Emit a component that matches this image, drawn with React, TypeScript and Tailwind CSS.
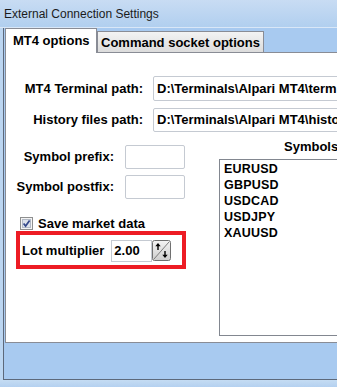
const inputBox =
  "bg-white border border-[#c5cad2] rounded-[2px] flex items-center";

function CheckBox() {
  return (
    <svg width="13" height="13" viewBox="0 0 13 13">
      <rect x="0.5" y="0.5" width="12" height="12" fill="#f4f4f4" stroke="#8e8f8f" />
      <rect x="2.5" y="2.5" width="8" height="8" fill="#dde2ea" stroke="#b3bac6" />
      <path d="M3.6 6.4 L5.6 9 L9.6 3.4" stroke="#34488a" strokeWidth="1.7" fill="none" />
    </svg>
  );
}

function Spinner() {
  return (
    <svg width="19" height="21" viewBox="0 0 19 21">
      <defs>
        <linearGradient id="spin" x1="0" y1="0" x2="0" y2="1">
          <stop offset="0" stopColor="#f4f4f4" />
          <stop offset="1" stopColor="#cdcdcd" />
        </linearGradient>
      </defs>
      <rect x="0.5" y="0.5" width="18" height="20" rx="2" fill="url(#spin)" stroke="#707070" />
      <line x1="2" y1="19" x2="17" y2="2" stroke="#7d7d7d" />
      <path d="M6 3 L3.3 6.2 H5.3 V10 H6.7 V6.2 H8.7 Z" fill="#000" />
      <path d="M13 18 L10.3 14.8 H12.3 V11 H13.7 V14.8 H15.7 Z" fill="#000" />
    </svg>
  );
}

export default function App() {
  const symbols = ["EURUSD", "GBPUSD", "USDCAD", "USDJPY", "XAUUSD"];

  return (
    <div className="w-[337px] h-[387px] overflow-hidden bg-[#bcd6f1] font-['Liberation_Sans',Arial,sans-serif] text-black">
      <div className="w-[440px] h-full flex flex-col">
        {/* title bar */}
        <div className="h-[27px] shrink-0 flex items-center pl-[4px] bg-gradient-to-b from-[#c8dcf3] to-[#b1cfef] text-[12px] text-[#1b1b1b]">
          External Connection Settings
        </div>
        <div className="h-px shrink-0 bg-[#d9e7f7]" />

        {/* client area */}
        <div className="ml-[3px] h-[352px] shrink-0 border-l border-b border-[#5d697b] bg-[#a8caf0] pl-px flex flex-col">
          {/* tabs */}
          <div className="h-[24px] flex items-end text-[13px] font-bold">
            <div className="relative z-10 -mb-px h-[25px] w-[92px] bg-white border-t border-l border-r border-[#898c95] flex items-center pl-[7px]">
              MT4 options
            </div>
            <div className="h-[21px] w-[167px] bg-gradient-to-b from-[#f3f3f3] to-[#dcdcdc] border-t border-l border-r border-[#898c95] flex items-center pl-[3px] pt-[1px]">
              Command socket options
            </div>
          </div>

          {/* panel */}
          <div className="h-[291px] shrink-0 bg-white border border-[#898c95] pt-[23px] text-[13px] font-bold">
            <div className="h-[25px] flex items-center">
              <span className="w-[137px] text-right">MT4 Terminal path:</span>
              <div className={`${inputBox} ml-[10px] w-[280px] h-[25px] pl-[3px] whitespace-nowrap`}>
                D:\Terminals\Alpari MT4\terminal.exe
              </div>
            </div>
            <div className="mt-[7px] h-[24px] flex items-center">
              <span className="w-[137px] text-right">History files path:</span>
              <div className={`${inputBox} ml-[10px] w-[280px] h-[24px] pl-[3px] whitespace-nowrap`}>
                D:\Terminals\Alpari MT4\history
              </div>
            </div>

            <div className="mt-[8px] flex">
              {/* left column */}
              <div className="w-[213px] shrink-0 flex flex-col pt-[5px]">
                <div className="h-[24px] flex items-center">
                  <span className="w-[108px] text-right">Symbol prefix:</span>
                  <div className={`${inputBox} ml-[11px] w-[60px] h-[24px]`} />
                </div>
                <div className="mt-[6px] h-[24px] flex items-center">
                  <span className="w-[108px] text-right">Symbol postfix:</span>
                  <div className={`${inputBox} ml-[11px] w-[60px] h-[24px]`} />
                </div>

                <div className="mt-[18px] ml-[14px] h-[13px] flex items-center">
                  <CheckBox />
                  <span className="ml-[5px]">Save market data</span>
                </div>

                <div className="mt-[1px] ml-[10px] w-[170px] h-[38px] border-4 border-[#ed1c24] flex items-center pl-[2px] pt-[1px]">
                  <span>Lot multiplier</span>
                  <div className={`${inputBox} ml-[7px] w-[41px] h-[22px] pl-[2px] rounded-none`}>2.00</div>
                  <Spinner />
                </div>
              </div>

              {/* right column */}
              <div className="flex flex-col">
                <span className="ml-[65px] h-[14px] leading-[14px]">Symbols</span>
                <div className="mt-[5px] w-[190px] h-[177px] border border-[#828790] pl-[4px] pt-px">
                  {symbols.map((s) => (
                    <div key={s} className="text-[12.5px] leading-[16px] tracking-[0.2px]">
                      {s}
                    </div>
                  ))}
                </div>
              </div>
            </div>
          </div>

          <div className="flex-1" />
        </div>

        {/* bottom frame */}
        <div className="flex-1 bg-gradient-to-b from-[#c5dcf3] to-[#b4d1f0]" />
      </div>
    </div>
  );
}
